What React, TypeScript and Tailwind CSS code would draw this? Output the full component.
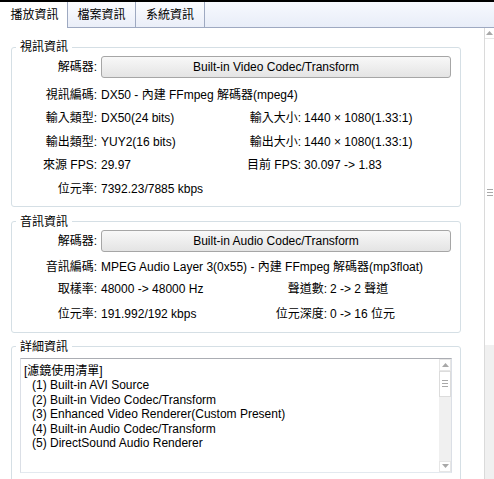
import type { ReactNode } from "react";

function Arrow({ down }: { down?: boolean }) {
  return (
    <svg width="7" height="4" viewBox="0 0 7 4" className="fill-[#a8a8a8]">
      {down ? <path d="M0 0H7L3.5 4Z" /> : <path d="M3.5 0L7 4H0Z" />}
    </svg>
  );
}

function Grip() {
  return (
    <div className="flex flex-col gap-[2px]">
      <div className="h-px w-[6px] bg-[#a8a8a8]" />
      <div className="h-px w-[6px] bg-[#a8a8a8]" />
      <div className="h-px w-[6px] bg-[#a8a8a8]" />
    </div>
  );
}

function Tabs() {
  return (
    <div className="flex h-[26px] border-b border-[#9ea9c1] bg-linear-to-b from-[#f7f9fe] to-[#e8edf8]">
      <div className="-mb-px flex w-[67px] items-center justify-center bg-white pl-[2px]">播放資訊</div>
      <div className="flex w-[69px] items-center justify-center border-x border-[#9ea9c1] bg-linear-to-b from-[#fbfcff] to-[#eaeef8]">
        檔案資訊
      </div>
      <div className="flex w-[69px] items-center justify-center border-r border-[#9ea9c1] bg-linear-to-b from-[#fbfcff] to-[#eaeef8]">
        系統資訊
      </div>
    </div>
  );
}

function Group({ title, className, children }: { title: string; className: string; children: ReactNode }) {
  return (
    <fieldset className={`w-[450px] rounded-[3px] border border-[#d5dfe5] ${className}`}>
      <legend className="ml-[4px] h-[16px] px-[4px] leading-[16px]">{title}</legend>
      {children}
    </fieldset>
  );
}

function CodecRow({ name, className }: { name: string; className: string }) {
  return (
    <div className={`flex items-center ${className}`}>
      <span className="w-[85px] text-right">解碼器:</span>
      <button className="ml-[4px] h-[22px] w-[350px] rounded-[3px] border border-[#a6a6a6] bg-linear-to-b from-[#f8f8f8] to-[#e4e4e4] leading-none">
        {name}
      </button>
    </div>
  );
}

function InfoRow({
  label,
  value,
  mid = "",
  label2,
  side = "",
  value2,
  className = "",
}: {
  label: string;
  value: string;
  mid?: string;
  label2?: string;
  side?: string;
  value2?: string;
  className?: string;
}) {
  return (
    <div className={`flex items-center whitespace-nowrap ${className}`}>
      <span className="w-[85px] text-right">{label}</span>
      <span className={`ml-[4px] ${mid}`}>{value}</span>
      {label2 && (
        <>
          <span className={`text-right ${side}`}>{label2}</span>
          <span className="ml-[3px]">{value2}</span>
        </>
      )}
    </div>
  );
}

const filters = [
  "(1) Built-in AVI Source",
  "(2) Built-in Video Codec/Transform",
  "(3) Enhanced Video Renderer(Custom Present)",
  "(4) Built-in Audio Codec/Transform",
  "(5) DirectSound Audio Renderer",
];

function FilterList() {
  return (
    <div className="ml-[8px] mt-[3px] flex h-[115px] w-[432px] border border-t-[#abadb3] border-x-[#dbdfe6] border-b-[#e3e9ef]">
      <div className="flex-1 pl-[3px] pt-[5px]">
        <div className="h-[14.6px] leading-[14.6px]">[濾鏡使用清單]</div>
        {filters.map((f) => (
          <div key={f} className="h-[14.6px] pl-[8px] leading-[14.6px]">
            {f}
          </div>
        ))}
      </div>
      <div className="flex w-[12px] flex-col bg-[#f0f0f0]">
        <div className="flex h-[12px] items-center justify-center border border-[#e6e6e6] bg-white">
          <Arrow />
        </div>
        <div className="flex h-[26px] items-center justify-center border border-[#dcdcdc] bg-white">
          <Grip />
        </div>
        <div className="flex-1" />
        <div className="flex h-[11px] items-center justify-center border border-[#e6e6e6] bg-white">
          <Arrow down />
        </div>
      </div>
    </div>
  );
}

function PageScrollbar() {
  return (
    <div className="flex w-[10px] flex-col border-l border-[#dadada] bg-[#f0f0f0]">
      <div className="flex h-[11px] items-center justify-center border-b border-[#e6e6e6] bg-white">
        <Arrow />
      </div>
      <div className="flex h-[306px] items-center justify-center bg-white">
        <Grip />
      </div>
    </div>
  );
}

export default function App() {
  return (
    <div className="flex h-[479px] w-[494px] flex-col overflow-hidden bg-white font-['Liberation_Sans','Noto_Sans_CJK_TC',sans-serif] text-[12px] text-black">
      <div className="h-[2px] bg-black" />
      <Tabs />
      <div className="flex min-h-0 flex-1">
        <div className="w-[484px] pl-[11px] pt-[11px]">
          <Group title="視訊資訊" className="pb-[5px]">
            <CodecRow name="Built-in Video Codec/Transform" className="mt-[1px]" />
            <div className="mt-[5px]">
              <InfoRow label="視訊編碼:" value="DX50 - 內建 FFmpeg 解碼器(mpeg4)" className="h-[23.5px]" />
              <InfoRow
                label="輸入類型:"
                value="DX50(24 bits)"
                mid="w-[146px]"
                label2="輸入大小:"
                side="w-[54px]"
                value2="1440 × 1080(1.33:1)"
                className="h-[23.5px]"
              />
              <InfoRow
                label="輸出類型:"
                value="YUY2(16 bits)"
                mid="w-[146px]"
                label2="輸出大小:"
                side="w-[54px]"
                value2="1440 × 1080(1.33:1)"
                className="h-[23.5px]"
              />
              <InfoRow
                label="來源 FPS:"
                value="29.97"
                mid="w-[146px]"
                label2="目前 FPS:"
                side="w-[54px]"
                value2="30.097 -> 1.83"
                className="h-[23.5px]"
              />
              <InfoRow label="位元率:" value="7392.23/7885 kbps" className="h-[23.5px]" />
            </div>
          </Group>

          <Group title="音訊資訊" className="mt-[7px] pb-[7px]">
            <CodecRow name="Built-in Audio Codec/Transform" className="" />
            <InfoRow
              label="音訊編碼:"
              value="MPEG Audio Layer 3(0x55) - 內建 FFmpeg 解碼器(mp3float)"
              className="mt-[4px] h-[22px]"
            />
            <InfoRow
              label="取樣率:"
              value="48000 -> 48000 Hz"
              mid="w-[168px]"
              label2="聲道數:"
              side="w-[58px]"
              value2="2 -> 2 聲道"
              className="h-[22px]"
            />
            <InfoRow
              label="位元率:"
              value="191.992/192 kbps"
              mid="w-[168px]"
              label2="位元深度:"
              side="w-[58px]"
              value2="0 -> 16 位元"
              className="mt-[3px] h-[22px]"
            />
          </Group>

          <Group title="詳細資訊" className="mt-[6px] pb-[10px]">
            <FilterList />
          </Group>
        </div>
        <PageScrollbar />
      </div>
    </div>
  );
}
